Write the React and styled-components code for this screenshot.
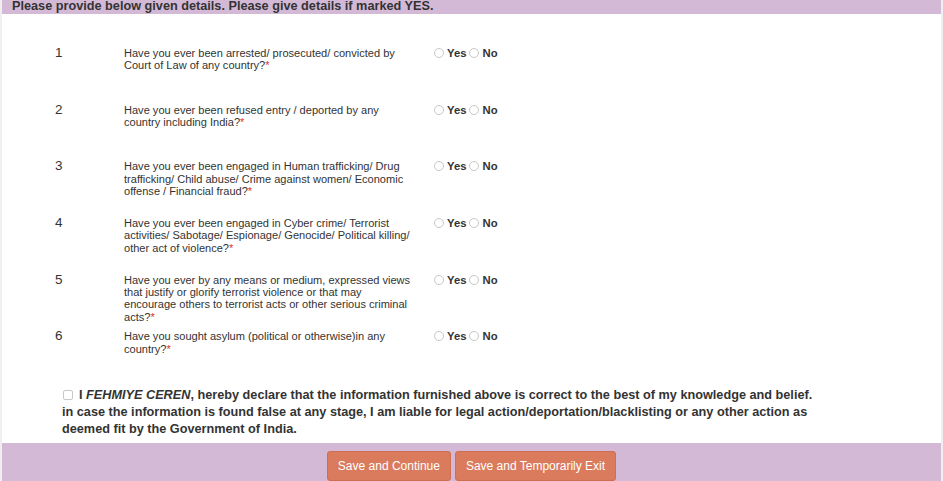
import React from 'react';
import styled, { createGlobalStyle } from 'styled-components';

const GlobalStyle = createGlobalStyle`
  html, body {
    margin: 0;
    padding: 0;
    background: #efefef;
    font-family: "Liberation Sans", Arial, sans-serif;
    color: #333;
    overflow: hidden;
  }
`

const Page = styled.div`
  margin: 0 2px;
  width: 939px;
  height: 481px;
  background: #fff;
  display: flex;
  flex-direction: column;
`

const Header = styled.div`
  background: #d4b9d6;
  height: 15px;
  padding-left: 10px;
  font-size: 12.7px;
  font-weight: bold;
  line-height: 12px;
  color: #333;
  overflow: hidden;
  white-space: nowrap;
`

const List = styled.div`
  padding-top: 33px;
`

const Row = styled.div`
  display: grid;
  grid-template-columns: 69px 310px auto;
  padding-left: 53px;
  height: 56.7px;
`

const Num = styled.div`
  font-size: 13.5px;
  line-height: 12.3px;
  color: #333;
`

const Question = styled.div`
  font-size: 11.05px;
  line-height: 12.3px;
  color: #333;
`

const Line = styled.span`
  display: block;
  white-space: nowrap;
`

const Star = styled.span`
  color: #e2321f;
`

const Options = styled.div`
  display: flex;
  align-items: center;
  height: 12.3px;
  font-size: 11.3px;
  font-weight: bold;
  color: #333;
`

const Radio = styled.input.attrs({ type: 'radio' })`
  appearance: none;
  margin: 0 3px 0 0;
  width: 10px;
  height: 10px;
  border: 1px solid #c8c8c8;
  border-radius: 50%;
  background: #fff;
  box-sizing: border-box;
`

const Choice = styled.label`
  display: flex;
  align-items: center;
  margin-right: 3px;
`

const Declaration = styled.p`
  margin: 0;
  padding-left: 60px;
  font-size: 12.7px;
  font-weight: bold;
  line-height: 17px;
  color: #333;
  white-space: nowrap;
`

const Check = styled.input.attrs({ type: 'checkbox' })`
  appearance: none;
  width: 10px;
  height: 10px;
  border: 1px solid #c8c8c8;
  border-radius: 2px;
  margin: 0 6px 0 1px;
  vertical-align: -1px;
  box-sizing: border-box;
`

const Footer = styled.div`
  margin-top: 5px;
  background: #d4b9d6;
  flex: 1;
  display: flex;
  justify-content: center;
  gap: 4px;
  padding-top: 8px;
`

const Button = styled.button`
  background: #d97b5c;
  border: 1px solid #cf6e50;
  border-radius: 3px;
  color: #fff;
  font-family: "Liberation Sans", Arial, sans-serif;
  font-size: 12px;
  height: 30px;
  padding: 0 10px;
`

const questions = [
  ["Have you ever been arrested/ prosecuted/ convicted by", "Court of Law of any country?"],
  ["Have you ever been refused entry / deported by any", "country including India?"],
  ["Have you ever been engaged in Human trafficking/ Drug", "trafficking/ Child abuse/ Crime against women/ Economic", "offense / Financial fraud?"],
  ["Have you ever been engaged in Cyber crime/ Terrorist", "activities/ Sabotage/ Espionage/ Genocide/ Political killing/", "other act of violence?"],
  ["Have you ever by any means or medium, expressed views", "that justify or glorify terrorist violence or that may", "encourage others to terrorist acts or other serious criminal", "acts?"],
  ["Have you sought asylum (political or otherwise)in any", "country?"],
];

export default function App() {
  return (
    <>
      <GlobalStyle />
      <Page>
        <Header>Please provide below given details. Please give details if marked YES.</Header>
        <List>
          {questions.map((lines, i) => (
            <Row key={i}>
              <Num>{i + 1}</Num>
              <Question>
                {lines.map((l, j) => (
                  <Line key={j}>{l}{j === lines.length - 1 && <Star>*</Star>}</Line>
                ))}
              </Question>
              <Options>
                <Choice><Radio name={'q' + i} />Yes</Choice>
                <Choice><Radio name={'q' + i} />No</Choice>
              </Options>
            </Row>
          ))}
        </List>
        <Declaration>
          <Check />I <i>FEHMIYE CEREN</i>, hereby declare that the information furnished above is correct to the best of my knowledge and belief.<br />
          in case the information is found false at any stage, I am liable for legal action/deportation/blacklisting or any other action as<br />
          deemed fit by the Government of India.
        </Declaration>
        <Footer>
          <Button>Save and Continue</Button>
          <Button>Save and Temporarily Exit</Button>
        </Footer>
      </Page>
    </>
  );
}
